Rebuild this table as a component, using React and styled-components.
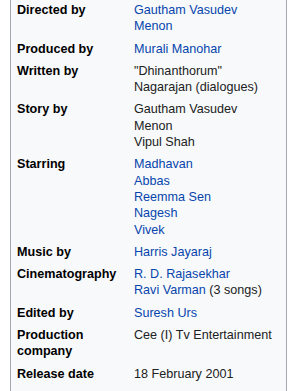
import React from "react";
import styled, { createGlobalStyle } from "styled-components";

const GlobalStyle = createGlobalStyle`
  body {
    margin: 0;
    background: #fff;
    font-family: "Liberation Sans", Arial, sans-serif;
  }
`;

const Infobox = styled.div`
  margin-left: 10px;
  width: 277px;
  box-sizing: border-box;
  background: #f8f9fa;
  border: 1px solid #a2a9b1;
  border-top: none;
  padding: 0 0 12px 6px;
  font-size: 12.6px;
  line-height: 16.3px;
  color: #202122;
`;

const Row = styled.div`
  display: grid;
  grid-template-columns: 117px 1fr;
  padding: 3px 0;
  &:first-child {
    padding-top: 2px;
  }
`;

const Label = styled.div`
  font-weight: bold;
  color: #000;
`;

const Value = styled.div`
  display: flex;
  flex-direction: column;
`;

const Item = styled.span`
  color: ${(p) => (p.$link ? "#0645ad" : "#202122")};
  white-space: nowrap;
`;

const rows = [
  { label: ["Directed by"], values: [["Gautham Vasudev", true], ["Menon", true]] },
  { label: ["Produced by"], values: [["Murali Manohar", true]] },
  {
    label: ["Written by"],
    values: [['"Dhinanthorum"', false], ["Nagarajan (dialogues)", false]],
  },
  {
    label: ["Story by"],
    values: [["Gautham Vasudev", false], ["Menon", false], ["Vipul Shah", false]],
  },
  {
    label: ["Starring"],
    values: [
      ["Madhavan", true],
      ["Abbas", true],
      ["Reemma Sen", true],
      ["Nagesh", true],
      ["Vivek", true],
    ],
  },
  { label: ["Music by"], values: [["Harris Jayaraj", true]] },
  {
    label: ["Cinematography"],
    values: [["R. D. Rajasekhar", true], ["Ravi Varman (3 songs)", true, "(3 songs)"]],
  },
  { label: ["Edited by"], values: [["Suresh Urs", true]] },
  {
    label: ["Production", "company"],
    values: [["Cee (I) Tv Entertainment", false]],
  },
  { label: ["Release date"], values: [["18 February 2001", false]] },
];

export default function App() {
  return (
    <>
      <GlobalStyle />
      <Infobox>
        {rows.map((r) => (
          <Row key={r.label.join(" ")}>
            <Label>
              {r.label.map((l) => (
                <div key={l}>{l}</div>
              ))}
            </Label>
            <Value>
              {r.values.map(([text, link, tail]) =>
                tail ? (
                  <div key={text}>
                    <Item $link>{text.replace(" " + tail, "")}</Item>{" "}
                    <Item>{tail}</Item>
                  </div>
                ) : (
                  <Item key={text} $link={link}>
                    {text}
                  </Item>
                )
              )}
            </Value>
          </Row>
        ))}
      </Infobox>
    </>
  );
}
